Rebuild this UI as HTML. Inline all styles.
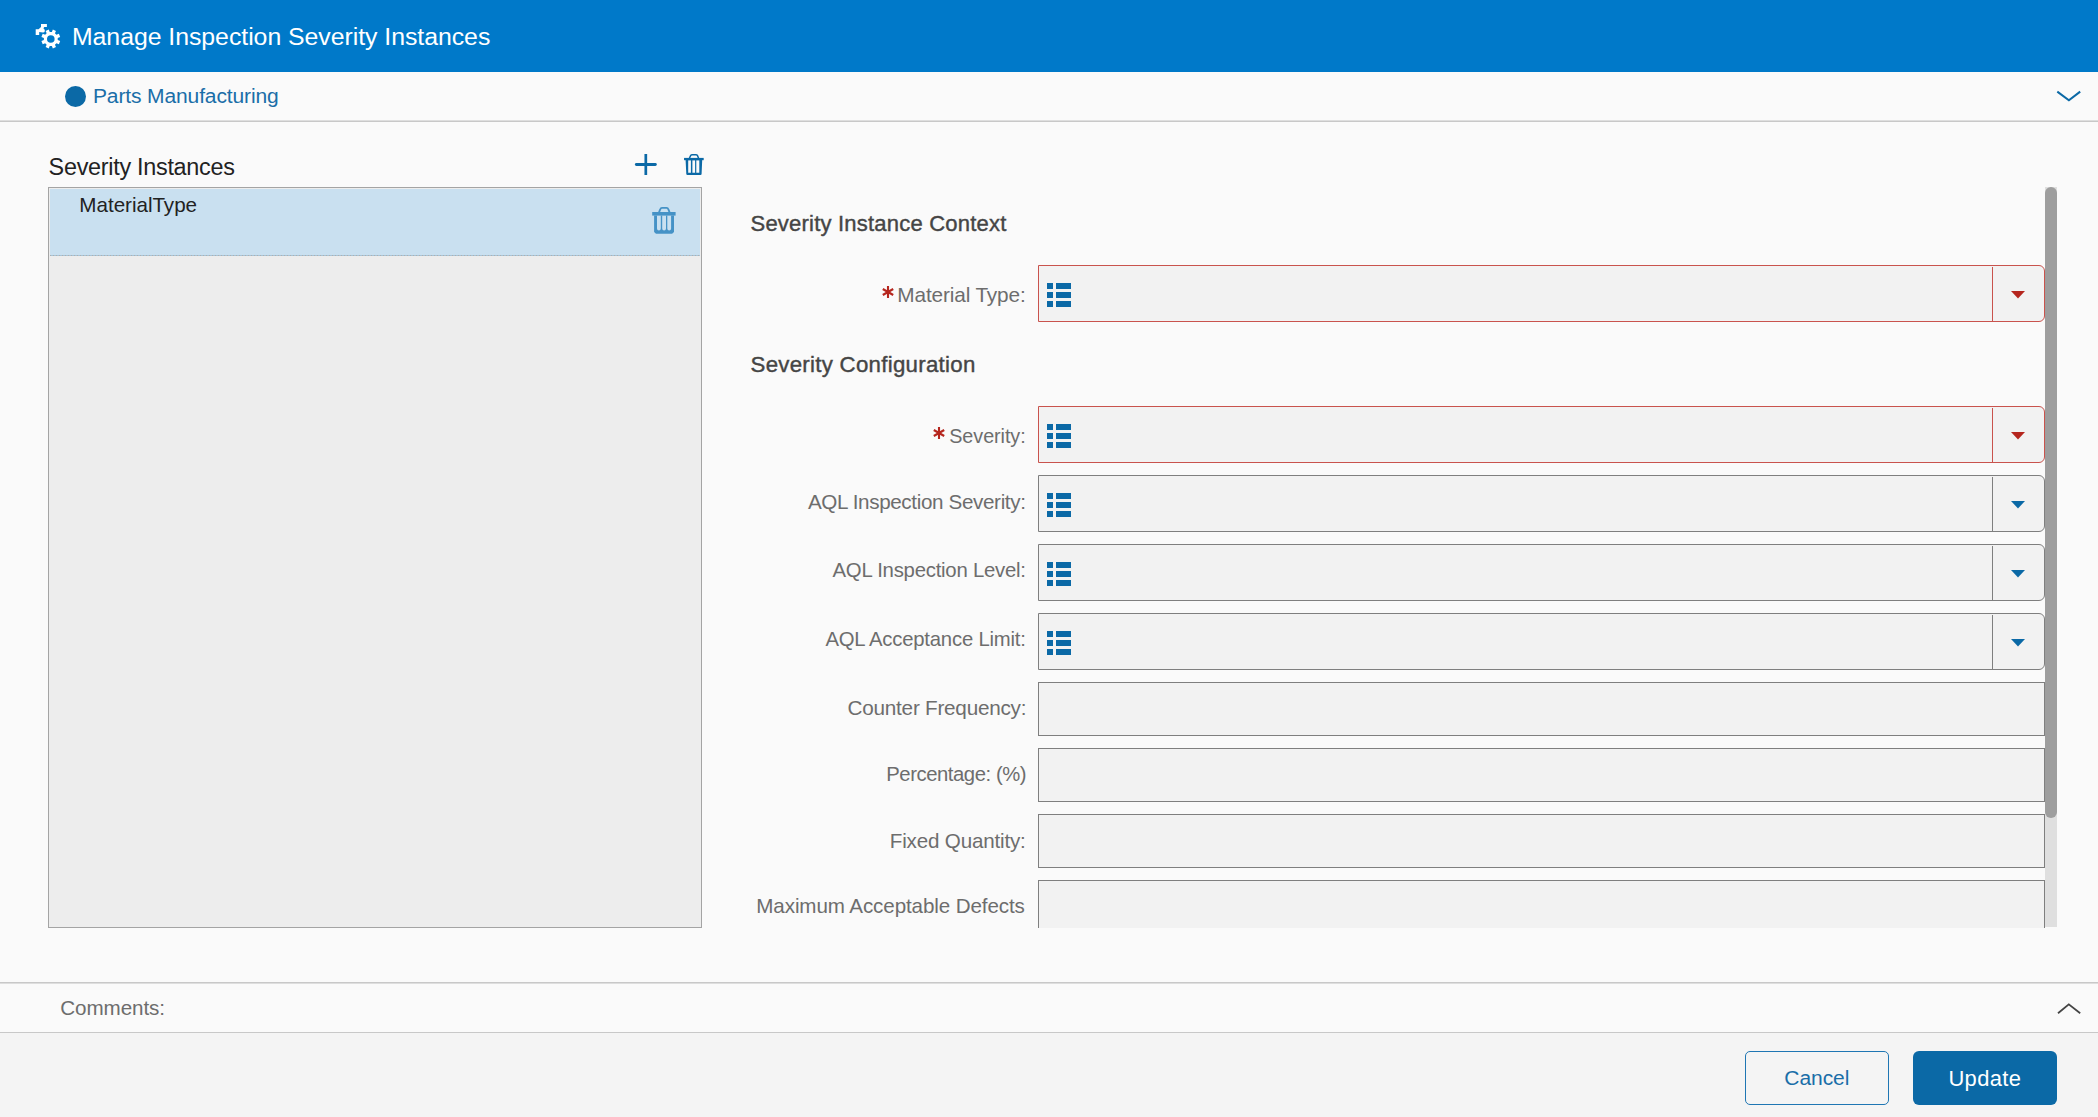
<!DOCTYPE html>
<html><head><meta charset="utf-8"><title>Manage Inspection Severity Instances</title>
<style>
html,body{margin:0;padding:0}
body{width:2098px;height:1117px;position:relative;overflow:hidden;background:#fafafa;font-family:"Liberation Sans",sans-serif}
.t{position:absolute;white-space:nowrap}
</style></head><body>
<div style="position:absolute;left:0px;top:0px;width:2098px;height:72px;background:#0079c9;"></div>
<div style="position:absolute;left:0px;top:120px;width:2098px;height:1px;background:#dedede;"></div>
<div style="position:absolute;left:0px;top:121px;width:2098px;height:1px;background:#c8c8c8;"></div>
<div style="position:absolute;left:0px;top:982px;width:2098px;height:1px;background:#c8c8c8;"></div>
<div style="position:absolute;left:0px;top:983px;width:2098px;height:1px;background:#dedede;"></div>
<div style="position:absolute;left:0px;top:1032px;width:2098px;height:1px;background:#c8c8c8;"></div>
<div style="position:absolute;left:0px;top:1033px;width:2098px;height:84px;background:#f4f4f4;"></div>
<svg style="position:absolute;left:30px;top:20px" width="36" height="32" viewBox="30 20 36 32"><g fill="#fff">
<path d="M41 24 H46.9 V26.9 H44.3 L43.4 28.3 Q44.9 29.6 44.9 30.9 Q44.6 32.4 42.9 32.6 Q41 32.2 39.2 31.9 V34.9 H35.7 V29.2 H38.6 L41 26.9 Z"/>
<path transform="translate(50.8,39)" d="M1.07 -6.92 L2.06 -9.38 L5.18 -8.09 L4.13 -5.65 L5.65 -4.13 L8.09 -5.18 L9.38 -2.06 L6.92 -1.07 L6.92 1.07 L9.38 2.06 L8.09 5.18 L5.65 4.13 L4.13 5.65 L5.18 8.09 L2.06 9.38 L1.07 6.92 L-1.07 6.92 L-2.06 9.38 L-5.18 8.09 L-4.13 5.65 L-5.65 4.13 L-8.09 5.18 L-9.38 2.06 L-6.92 1.07 L-6.92 -1.07 L-9.38 -2.06 L-8.09 -5.18 L-5.65 -4.13 L-4.13 -5.65 L-5.18 -8.09 L-2.06 -9.38 L-1.07 -6.92 Z M0 -3.8 A3.8 3.8 0 1 0 0 3.8 A3.8 3.8 0 1 0 0 -3.8 Z" fill-rule="evenodd"/></g></svg>
<div style="position:absolute;left:64.5px;top:85.5px;width:21px;height:21px;border-radius:50%;background:#0b69a6"></div>
<svg style="position:absolute;left:2054px;top:86px" width="30" height="20" viewBox="0 0 30 20"><path d="M3.3 5.6 L14.9 14.3 L26.2 5.6" fill="none" stroke="#0b69a6" stroke-width="2"/></svg>
<svg style="position:absolute;left:630px;top:150px" width="30" height="30" viewBox="0 0 30 30"><path d="M15.8 4 V25" stroke="#0b69a6" stroke-width="2.7"/><path d="M6.3 14.5 H25.4" stroke="#0b69a6" stroke-width="2.8" stroke-linecap="round"/></svg>
<svg style="position:absolute;left:683px;top:153px" width="22" height="23" viewBox="0 0 22 23">
<path d="M6.4 5.2 L7.7 2.4 Q8.2 1.65 9.2 1.65 H12.9 Q13.9 1.65 14.4 2.4 L15.6 5.2" fill="none" stroke="#0b69a6" stroke-width="1.5"/>
<path d="M1.05 4.9 H20.7 V7.2 H1.05 Z" fill="#0b69a6"/>
<path d="M2.6 7 H19.2 L18.6 20.9 Q18.5 21.9 17.5 21.9 H4.4 Q3.4 21.9 3.3 20.9 Z M5.2 7.2 V19.8 H7.9 V7.2 Z M9.4 7.2 V19.8 H12.1 V7.2 Z M13.3 7.2 V19.8 H16.3 V7.2 Z" fill="#0b69a6" fill-rule="evenodd"/>
</svg>
<div style="position:absolute;left:48px;top:187px;width:652px;height:739px;border:1px solid #a4a4a4;background:#ededed"></div>
<div style="position:absolute;left:50px;top:189px;width:650px;height:66px;background:#c9e0f0;"></div>
<div style="position:absolute;left:50px;top:255px;width:650px;height:1px;background:transparent;background-image:repeating-linear-gradient(90deg,#b0b0b0 0 1px,#a6c4d8 1px 3px)"></div>
<svg style="position:absolute;left:652px;top:206px" width="26" height="30" viewBox="0 0 26 30">
<path d="M6.9 6.6 L8.3 3.1 Q8.7 1.9 10 1.9 H14.6 Q15.9 1.9 16.3 3.1 L17.7 6.6" fill="none" stroke="#4592c6" stroke-width="1.8"/>
<path d="M0.2 6 H23.6 V9.6 H0.2 Z" fill="#4592c6"/>
<path d="M2.1 9.4 H22 V25.9 L20.1 27.8 H4 L2.1 25.9 Z M5 9.6 V22.5 Q5 24.4 6.9 24.4 Q8.8 24.4 8.8 22.5 V9.6 Z M10.2 9.6 V22.5 Q10.2 24.4 12.1 24.4 Q14 24.4 14 22.5 V9.6 Z M15.3 9.6 V22.5 Q15.3 24.4 17.2 24.4 Q19.1 24.4 19.1 22.5 V9.6 Z" fill="#4592c6" fill-rule="evenodd"/>
</svg>
<div style="position:absolute;left:1038px;top:265px;width:1005px;height:55px;border:1px solid #c9534d;border-radius:0 6px 6px 0;background:#f2f2f2"></div>
<div style="position:absolute;left:1992px;top:267px;width:1.4px;height:55px;background:#c9534d"></div>
<div style="position:absolute;left:1047px;top:283px;width:6px;height:6px;background:#0b69a6;"></div>
<div style="position:absolute;left:1056px;top:283px;width:15px;height:6px;background:#0b69a6;"></div>
<div style="position:absolute;left:1047px;top:292px;width:6px;height:6px;background:#0b69a6;"></div>
<div style="position:absolute;left:1056px;top:292px;width:15px;height:6px;background:#0b69a6;"></div>
<div style="position:absolute;left:1047px;top:301px;width:6px;height:6px;background:#0b69a6;"></div>
<div style="position:absolute;left:1056px;top:301px;width:15px;height:6px;background:#0b69a6;"></div>
<svg style="position:absolute;left:2010px;top:290px" width="16" height="10" viewBox="0 0 16 10"><path d="M1 1 H15 L8 8.5 Z" fill="#b5261e"/></svg>
<div style="position:absolute;left:1038px;top:406px;width:1005px;height:55px;border:1px solid #c9534d;border-radius:0 6px 6px 0;background:#f2f2f2"></div>
<div style="position:absolute;left:1992px;top:408px;width:1.4px;height:55px;background:#c9534d"></div>
<div style="position:absolute;left:1047px;top:424px;width:6px;height:6px;background:#0b69a6;"></div>
<div style="position:absolute;left:1056px;top:424px;width:15px;height:6px;background:#0b69a6;"></div>
<div style="position:absolute;left:1047px;top:433px;width:6px;height:6px;background:#0b69a6;"></div>
<div style="position:absolute;left:1056px;top:433px;width:15px;height:6px;background:#0b69a6;"></div>
<div style="position:absolute;left:1047px;top:442px;width:6px;height:6px;background:#0b69a6;"></div>
<div style="position:absolute;left:1056px;top:442px;width:15px;height:6px;background:#0b69a6;"></div>
<svg style="position:absolute;left:2010px;top:431px" width="16" height="10" viewBox="0 0 16 10"><path d="M1 1 H15 L8 8.5 Z" fill="#b5261e"/></svg>
<div style="position:absolute;left:1038px;top:475px;width:1005px;height:55px;border:1px solid #7f7f7f;border-radius:0 6px 6px 0;background:#f2f2f2"></div>
<div style="position:absolute;left:1992px;top:477px;width:1.4px;height:55px;background:#7f7f7f"></div>
<div style="position:absolute;left:1047px;top:493px;width:6px;height:6px;background:#0b69a6;"></div>
<div style="position:absolute;left:1056px;top:493px;width:15px;height:6px;background:#0b69a6;"></div>
<div style="position:absolute;left:1047px;top:502px;width:6px;height:6px;background:#0b69a6;"></div>
<div style="position:absolute;left:1056px;top:502px;width:15px;height:6px;background:#0b69a6;"></div>
<div style="position:absolute;left:1047px;top:511px;width:6px;height:6px;background:#0b69a6;"></div>
<div style="position:absolute;left:1056px;top:511px;width:15px;height:6px;background:#0b69a6;"></div>
<svg style="position:absolute;left:2010px;top:500px" width="16" height="10" viewBox="0 0 16 10"><path d="M1 1 H15 L8 8.5 Z" fill="#0b69a6"/></svg>
<div style="position:absolute;left:1038px;top:544px;width:1005px;height:55px;border:1px solid #7f7f7f;border-radius:0 6px 6px 0;background:#f2f2f2"></div>
<div style="position:absolute;left:1992px;top:546px;width:1.4px;height:55px;background:#7f7f7f"></div>
<div style="position:absolute;left:1047px;top:562px;width:6px;height:6px;background:#0b69a6;"></div>
<div style="position:absolute;left:1056px;top:562px;width:15px;height:6px;background:#0b69a6;"></div>
<div style="position:absolute;left:1047px;top:571px;width:6px;height:6px;background:#0b69a6;"></div>
<div style="position:absolute;left:1056px;top:571px;width:15px;height:6px;background:#0b69a6;"></div>
<div style="position:absolute;left:1047px;top:580px;width:6px;height:6px;background:#0b69a6;"></div>
<div style="position:absolute;left:1056px;top:580px;width:15px;height:6px;background:#0b69a6;"></div>
<svg style="position:absolute;left:2010px;top:569px" width="16" height="10" viewBox="0 0 16 10"><path d="M1 1 H15 L8 8.5 Z" fill="#0b69a6"/></svg>
<div style="position:absolute;left:1038px;top:613px;width:1005px;height:55px;border:1px solid #7f7f7f;border-radius:0 6px 6px 0;background:#f2f2f2"></div>
<div style="position:absolute;left:1992px;top:615px;width:1.4px;height:55px;background:#7f7f7f"></div>
<div style="position:absolute;left:1047px;top:631px;width:6px;height:6px;background:#0b69a6;"></div>
<div style="position:absolute;left:1056px;top:631px;width:15px;height:6px;background:#0b69a6;"></div>
<div style="position:absolute;left:1047px;top:640px;width:6px;height:6px;background:#0b69a6;"></div>
<div style="position:absolute;left:1056px;top:640px;width:15px;height:6px;background:#0b69a6;"></div>
<div style="position:absolute;left:1047px;top:649px;width:6px;height:6px;background:#0b69a6;"></div>
<div style="position:absolute;left:1056px;top:649px;width:15px;height:6px;background:#0b69a6;"></div>
<svg style="position:absolute;left:2010px;top:638px" width="16" height="10" viewBox="0 0 16 10"><path d="M1 1 H15 L8 8.5 Z" fill="#0b69a6"/></svg>
<div style="position:absolute;left:1038px;top:682px;width:1005px;height:52px;border:1px solid #7f7f7f;background:#f2f2f2;"></div>
<div style="position:absolute;left:1038px;top:748px;width:1005px;height:52px;border:1px solid #7f7f7f;background:#f2f2f2;"></div>
<div style="position:absolute;left:1038px;top:814px;width:1005px;height:52px;border:1px solid #7f7f7f;background:#f2f2f2;"></div>
<div style="position:absolute;left:1038px;top:880px;width:1005px;height:47px;border:1px solid #7f7f7f;background:#f2f2f2;border-bottom:none"></div>
<svg style="position:absolute;left:879.8px;top:284.1px" width="16" height="16" viewBox="-8 -8 16 16"><g stroke="#b5261e" stroke-width="2.1"><path d="M0 -6 V6"/><path d="M-5.2 -3 L5.2 3"/><path d="M-5.2 3 L5.2 -3"/></g></svg>
<svg style="position:absolute;left:931.3px;top:425.3px" width="16" height="16" viewBox="-8 -8 16 16"><g stroke="#b5261e" stroke-width="2.1"><path d="M0 -6 V6"/><path d="M-5.2 -3 L5.2 3"/><path d="M-5.2 3 L5.2 -3"/></g></svg>
<div style="position:absolute;left:2045px;top:187px;width:12px;height:740px;background:#dfdfdf;"></div>
<div style="position:absolute;left:2045px;top:187px;width:12px;height:631px;background:#9e9e9e;border-radius:6px"></div>
<svg style="position:absolute;left:2054px;top:998px" width="30" height="20" viewBox="0 0 30 20"><path d="M4 15.2 L14.8 6.4 L26.2 15.2" fill="none" stroke="#444" stroke-width="1.8"/></svg>
<div style="position:absolute;left:1745px;top:1051px;width:142px;height:52px;border:1px solid #1f76b3;border-radius:5px"></div>
<div style="position:absolute;left:1913px;top:1051px;width:144px;height:54px;background:#0b69a6;border-radius:6px"></div>
<div class="t" style="left:71.94px;top:24.83px;font-size:24.83px;line-height:24.83px;color:#fff;letter-spacing:-0.034px;">Manage Inspection Severity Instances</div>
<div class="t" style="left:92.94px;top:84.91px;font-size:21.02px;line-height:21.02px;color:#1a6ea8;letter-spacing:-0.125px;">Parts Manufacturing</div>
<div class="t" style="left:48.62px;top:156.13px;font-size:23.39px;line-height:23.39px;color:#222;letter-spacing:-0.278px;">Severity Instances</div>
<div class="t" style="left:79.36px;top:194.66px;font-size:20.63px;line-height:20.63px;color:#222;letter-spacing:-0.035px;">MaterialType</div>
<div class="t" style="left:750.54px;top:212.91px;font-size:22.02px;line-height:22.02px;color:#454545;letter-spacing:0.207px;-webkit-text-stroke:0.4px #454545;">Severity Instance Context</div>
<div class="t" style="left:750.54px;top:353.67px;font-size:22.25px;line-height:22.25px;color:#454545;letter-spacing:0.277px;-webkit-text-stroke:0.4px #454545;">Severity Configuration</div>
<div class="t" style="left:897.36px;top:284.66px;font-size:20.81px;line-height:20.81px;color:#6d6d6d;letter-spacing:-0.146px;">Material Type:</div>
<div class="t" style="left:949.24px;top:426.50px;font-size:19.79px;line-height:19.79px;color:#6d6d6d;letter-spacing:-0.063px;">Severity:</div>
<div class="t" style="left:807.88px;top:491.57px;font-size:20.65px;line-height:20.65px;color:#6d6d6d;letter-spacing:-0.363px;">AQL Inspection Severity:</div>
<div class="t" style="left:832.54px;top:560.42px;font-size:20.35px;line-height:20.35px;color:#6d6d6d;letter-spacing:-0.242px;">AQL Inspection Level:</div>
<div class="t" style="left:825.42px;top:629.17px;font-size:20.30px;line-height:20.30px;color:#6d6d6d;letter-spacing:-0.197px;">AQL Acceptance Limit:</div>
<div class="t" style="left:847.58px;top:698.35px;font-size:20.73px;line-height:20.73px;color:#6d6d6d;letter-spacing:-0.250px;">Counter Frequency:</div>
<div class="t" style="left:886.24px;top:764.28px;font-size:20.28px;line-height:20.28px;color:#6d6d6d;letter-spacing:-0.437px;">Percentage: (%)</div>
<div class="t" style="left:889.82px;top:830.91px;font-size:20.60px;line-height:20.60px;color:#6d6d6d;letter-spacing:-0.178px;">Fixed Quantity:</div>
<div class="t" style="left:756.32px;top:896.31px;font-size:20.60px;line-height:20.60px;color:#6d6d6d;letter-spacing:-0.108px;">Maximum Acceptable Defects</div>
<div class="t" style="left:60.20px;top:997.73px;font-size:20.64px;line-height:20.64px;color:#6d6d6d;letter-spacing:-0.071px;">Comments:</div>
<div class="t" style="left:1784.28px;top:1067.05px;font-size:21.03px;line-height:21.03px;color:#1a6ea8;letter-spacing:-0.061px;">Cancel</div>
<div class="t" style="left:1948.40px;top:1067.79px;font-size:21.93px;line-height:21.93px;color:#fff;letter-spacing:0.378px;">Update</div>
</body></html>
